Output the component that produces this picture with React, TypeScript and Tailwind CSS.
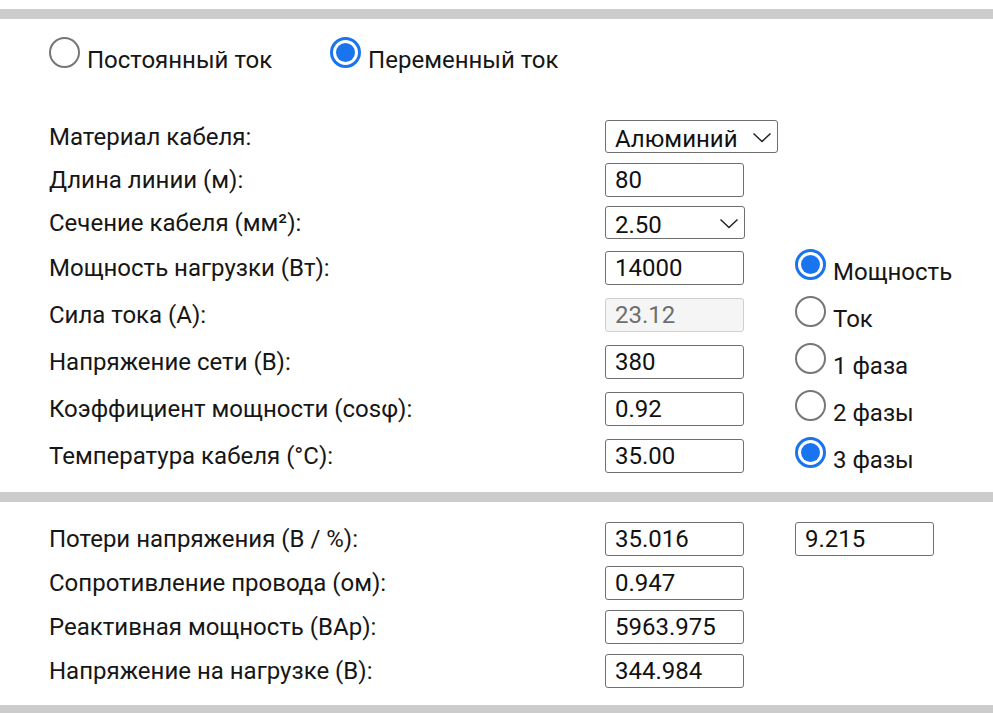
import { useState } from "react";

const inputCls =
  "h-[34px] w-[139px] rounded-[3px] border border-[#6f6f6f] bg-white pl-[9px] text-[24px] text-[#111] outline-none";

function Radio({ checked }: { checked: boolean }) {
  return checked ? (
    <span className="inline-block h-[31px] w-[31px] rounded-full border-[3px] border-[#1a74f0] bg-white p-[3px] align-baseline">
      <span className="block h-full w-full rounded-full bg-[#1a74f0]" />
    </span>
  ) : (
    <span className="inline-block h-[31px] w-[31px] rounded-full border-2 border-[#767676] bg-white align-baseline" />
  );
}

function RadioLabel({ checked, text, onClick }: { checked: boolean; text: string; onClick: () => void }) {
  return (
    <label className="cursor-pointer whitespace-nowrap" onClick={onClick}>
      <Radio checked={checked} />
      <span className="ml-[7px]">{text}</span>
    </label>
  );
}

function Select({ value, width, options }: { value: string; width: string; options: string[] }) {
  return (
    <div className={`relative h-[33px] ${width}`}>
      <select
        defaultValue={value}
        className="h-full w-full appearance-none rounded-[3px] border border-[#6f6f6f] bg-white pl-[9px] text-[24px] text-[#111] outline-none"
      >
        {options.map((o) => (
          <option key={o}>{o}</option>
        ))}
      </select>
      <svg
        className="pointer-events-none absolute right-[6px] top-[12px]"
        width="20"
        height="11"
        viewBox="0 0 20 11"
        fill="none"
        stroke="#222"
        strokeWidth="1.5"
      >
        <path d="M1.5 1.5 L10 9.5 L18.5 1.5" />
      </svg>
    </div>
  );
}

function Row({ h, label, children, right }: { h: string; label: string; children: React.ReactNode; right?: React.ReactNode }) {
  return (
    <div className={`flex items-center ${h}`}>
      <div className="w-[556px] whitespace-nowrap">{label}</div>
      <div className="w-[190px]">{children}</div>
      <div className="pt-[3px]">{right}</div>
    </div>
  );
}

export default function App() {
  const [mode, setMode] = useState("ac");
  const [calc, setCalc] = useState("power");
  const [phase, setPhase] = useState("3");

  return (
    <div className="min-h-screen bg-white pt-[9px] font-['Roboto','Noto_Sans',sans-serif] text-[24px] text-[#161616]">
      <div className="h-[10px] bg-[#cccccc]" />

      {/* current type */}
      <div className="flex h-[96px] gap-[58px] pl-[49px] pt-[18px]">
        <RadioLabel checked={mode === "dc"} text="Постоянный ток" onClick={() => setMode("dc")} />
        <RadioLabel checked={mode === "ac"} text="Переменный ток" onClick={() => setMode("ac")} />
      </div>

      {/* inputs */}
      <div className="pl-[49px]">
        <Row h="h-[43px]" label="Материал кабеля:">
          <Select value="Алюминий" width="w-[173px]" options={["Медь", "Алюминий"]} />
        </Row>
        <Row h="h-[43px]" label="Длина линии (м):">
          <input className={inputCls} defaultValue="80" />
        </Row>
        <Row h="h-[43px]" label="Сечение кабеля (мм²):">
          <Select value="2.50" width="w-[140px]" options={["1.50", "2.50", "4.00", "6.00", "10.00"]} />
        </Row>
        <Row
          h="h-[47px]"
          label="Мощность нагрузки (Вт):"
          right={<RadioLabel checked={calc === "power"} text="Мощность" onClick={() => setCalc("power")} />}
        >
          <input className={inputCls} defaultValue="14000" />
        </Row>
        <Row
          h="h-[47px]"
          label="Сила тока (А):"
          right={<RadioLabel checked={calc === "current"} text="Ток" onClick={() => setCalc("current")} />}
        >
          <input
            className="h-[34px] w-[139px] rounded-[3px] border border-[#cfcfcf] bg-[#f5f5f5] pl-[9px] text-[24px] text-[#6e6e6e] outline-none"
            defaultValue="23.12"
            disabled
          />
        </Row>
        <Row
          h="h-[47px]"
          label="Напряжение сети (В):"
          right={<RadioLabel checked={phase === "1"} text="1 фаза" onClick={() => setPhase("1")} />}
        >
          <input className={inputCls} defaultValue="380" />
        </Row>
        <Row
          h="h-[47px]"
          label="Коэффициент мощности (cosφ):"
          right={<RadioLabel checked={phase === "2"} text="2 фазы" onClick={() => setPhase("2")} />}
        >
          <input className={inputCls} defaultValue="0.92" />
        </Row>
        <Row
          h="h-[47px]"
          label="Температура кабеля (°C):"
          right={<RadioLabel checked={phase === "3"} text="3 фазы" onClick={() => setPhase("3")} />}
        >
          <input className={inputCls} defaultValue="35.00" />
        </Row>
      </div>

      <div className="mt-[13px] h-[10px] bg-[#cccccc]" />

      {/* results */}
      <div className="pl-[49px] pt-[15px]">
        <div className="flex h-[44px] items-center">
          <div className="w-[556px] whitespace-nowrap">Потери напряжения (В / %):</div>
          <div className="w-[190px]">
            <input className={inputCls} defaultValue="35.016" readOnly />
          </div>
          <input className={inputCls} defaultValue="9.215" readOnly />
        </div>
        <Row h="h-[44px]" label="Сопротивление провода (ом):">
          <input className={inputCls} defaultValue="0.947" readOnly />
        </Row>
        <Row h="h-[44px]" label="Реактивная мощность (ВАр):">
          <input className={inputCls} defaultValue="5963.975" readOnly />
        </Row>
        <Row h="h-[44px]" label="Напряжение на нагрузке (В):">
          <input className={inputCls} defaultValue="344.984" readOnly />
        </Row>
      </div>

      <div className="mt-[12px] h-[10px] bg-[#cccccc]" />
    </div>
  );
}
